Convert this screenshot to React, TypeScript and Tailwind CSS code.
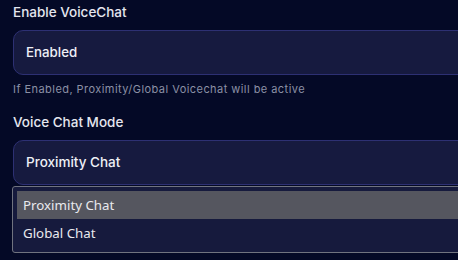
import React from "react";

export default function App() {
  return (
    <div className="w-[458px] h-[260px] overflow-hidden bg-[#040926] relative" style={{ fontFamily: "Inter, 'Noto Sans', sans-serif" }}>
      <div className="pl-[13px] w-[520px]">
        <div className="mt-[2px] h-[20px] leading-[20px] text-[13.5px] font-medium text-[#e4e6ef]">Enable VoiceChat</div>
        <div className="mt-[8px] h-[45px] rounded-[10px] border border-[#2d3073] bg-[#161a3f] flex items-center pl-[12px] text-[13.3px] font-medium text-[#eef0f6]">
          Enabled
        </div>
        <div className="mt-[6px] h-[16px] leading-[16px] text-[11px] tracking-[0.45px] text-[#8b90a5]">
          If Enabled, Proximity/Global Voicechat will be active
        </div>
        <div className="mt-[15px] h-[20px] leading-[20px] text-[13.5px] font-medium text-[#e4e6ef]">Voice Chat Mode</div>
        <div className="mt-[8px] h-[45px] rounded-[10px] border border-[#2d3073] bg-[#161a3f] flex items-center pl-[12px] text-[13.5px] font-medium text-[#eef0f6]">
          Proximity Chat
        </div>
        <div className="mt-[3px] h-[40px] rounded-[10px] border border-[#2d3073] bg-[#161a3f]"></div>
      </div>
      <div
        className="absolute left-[12px] top-[186px] w-[480px] h-[67px] rounded-[3px] border border-[#70737f] bg-[#161a3d] p-[4px] text-[13.3px] text-[#e9e9ee]"
        style={{ fontFamily: "'Noto Sans', 'Open Sans', sans-serif" }}
      >
        <div className="h-[28px] bg-[#55565f] flex items-center pl-[6px] pt-[2px]">Proximity Chat</div>
        <div className="h-[28px] flex items-center pl-[6px] pt-[2px]">Global Chat</div>
      </div>
    </div>
  );
}
